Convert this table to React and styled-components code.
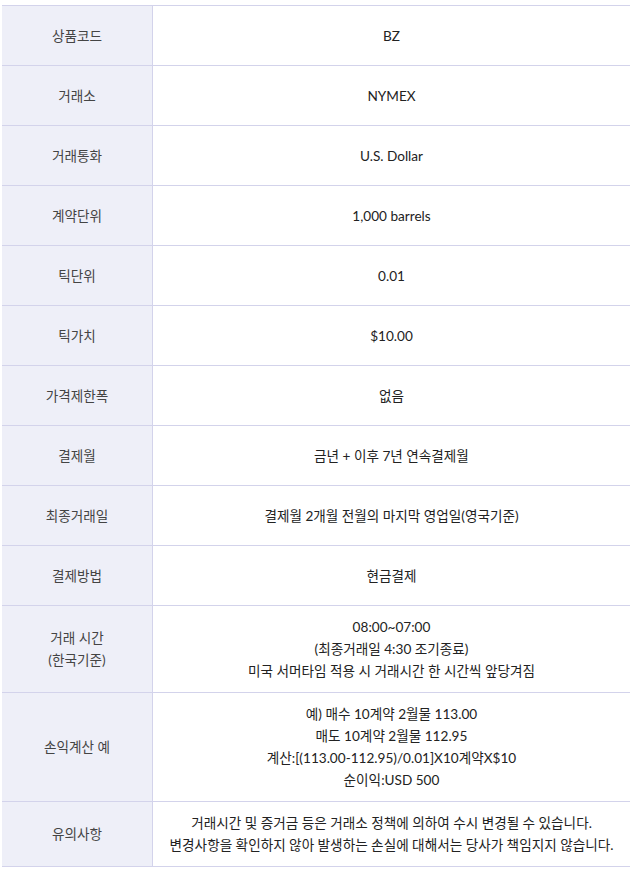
import React from 'react';
import styled, { createGlobalStyle } from 'styled-components';

const rows = [
  { label: ['상품코드'], value: ['BZ'] },
  { label: ['거래소'], value: ['NYMEX'] },
  { label: ['거래통화'], value: ['U.S. Dollar'] },
  { label: ['계약단위'], value: ['1,000 barrels'] },
  { label: ['틱단위'], value: ['0.01'] },
  { label: ['틱가치'], value: ['$10.00'] },
  { label: ['가격제한폭'], value: ['없음'] },
  { label: ['결제월'], value: ['금년 + 이후 7년 연속결제월'] },
  { label: ['최종거래일'], value: ['결제월 2개월 전월의 마지막 영업일(영국기준)'] },
  { label: ['결제방법'], value: ['현금결제'] },
  {
    label: ['거래 시간', '(한국기준)'],
    value: ['08:00~07:00', '(최종거래일 4:30 조기종료)', '미국 서머타임 적용 시 거래시간 한 시간씩 앞당겨짐'],
  },
  {
    label: ['손익계산 예'],
    value: ['예) 매수 10계약 2월물 113.00', '매도 10계약 2월물 112.95', '계산:[(113.00-112.95)/0.01]X10계약X$10', '순이익:USD 500'],
  },
  {
    label: ['유의사항'],
    value: [
      '거래시간 및 증거금 등은 거래소 정책에 의하여 수시 변경될 수 있습니다.',
      '변경사항을 확인하지 않아 발생하는 손실에 대해서는 당사가 책임지지 않습니다.',
    ],
  },
];

const Lines = ({ lines }) => lines.map((line, i) => (
  <React.Fragment key={i}>
    {i > 0 && <br />}
    {line}
  </React.Fragment>
));

const App = () => (
  <>
    <GlobalStyle />
    <Table>
      <tbody>
        {rows.map((row) => (
          <tr key={row.label.join('')}>
            <HeadCell scope="row">
              <Lines lines={row.label} />
            </HeadCell>
            <ValueCell>
              <Lines lines={row.value} />
            </ValueCell>
          </tr>
        ))}
      </tbody>
    </Table>
  </>
);

export default App;

const GlobalStyle = createGlobalStyle`
  body {
    margin: 5px 0 0 2px;
    background: #fff;
    font-family: Lato, "Noto Sans CJK KR", sans-serif;
  }
`;

const Table = styled.table`
  width: 628px;
  border-collapse: collapse;
  border-top: 1px solid #d3d3eb;
  font-size: 13.6px;
  line-height: 22px;
  color: #333;
`;

const HeadCell = styled.th`
  width: 150px;
  height: 39px;
  padding: 10px 0;
  box-sizing: content-box;
  background: #eeeff8;
  font-weight: 400;
  color: #444;
  text-align: center;
  border-right: 1px solid #d3d3eb;
  border-bottom: 1px solid #d3d3eb;
`;

const ValueCell = styled.td`
  height: 39px;
  padding: 10px 8px;
  text-align: center;
  background: #fff;
  color: #222;
  border-bottom: 1px solid #d3d3eb;
`;
